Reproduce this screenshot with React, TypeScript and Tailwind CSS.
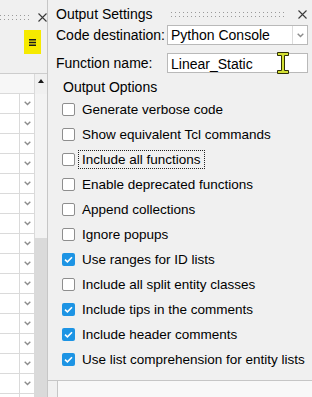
import React from "react";

const options = [
  { label: "Generate verbose code", checked: false },
  { label: "Show equivalent Tcl commands", checked: false },
  { label: "Include all functions", checked: false, focused: true },
  { label: "Enable deprecated functions", checked: false },
  { label: "Append collections", checked: false },
  { label: "Ignore popups", checked: false },
  { label: "Use ranges for ID lists", checked: true },
  { label: "Include all split entity classes", checked: false },
  { label: "Include tips in the comments", checked: true },
  { label: "Include header comments", checked: true },
  { label: "Use list comprehension for entity lists", checked: true },
];

// two rows of tiny dots, the drag handle on the panel headers
function Grip({ width }: { width: number }) {
  return (
    <svg width={width} height={5} className="block">
      <defs>
        <pattern id={`grip${width}`} width="4" height="4" patternUnits="userSpaceOnUse">
          <rect x="0" y="0" width="1" height="1" fill="#9a9a9a" />
        </pattern>
      </defs>
      <rect x="0" y="0" width={width} height="5" fill={`url(#grip${width})`} />
    </svg>
  );
}

function CloseX() {
  return (
    <svg width="9" height="9" viewBox="0 0 9 9" className="block">
      <path d="M0.5 0.5 L8.5 8.5 M8.5 0.5 L0.5 8.5" stroke="#3a3a3a" strokeWidth="1.1" />
    </svg>
  );
}

function Chevron() {
  return (
    <svg width="7" height="5" viewBox="0 0 7 5" className="block">
      <path d="M0.7 0.8 L3.5 3.6 L6.3 0.8" fill="none" stroke="#8c8c8c" strokeWidth="1.4" />
    </svg>
  );
}

function Checkbox({ checked }: { checked: boolean }) {
  if (checked) {
    return (
      <div className="w-[13px] h-[13px] shrink-0 rounded-[2px] bg-[#1d94e4] flex items-center justify-center">
        <svg width="9" height="7" viewBox="0 0 9 7" className="block">
          <path d="M1 3.6 L3.4 5.8 L8 1.2" fill="none" stroke="#ffffff" strokeWidth="1.6" />
        </svg>
      </div>
    );
  }
  return <div className="w-[13px] h-[13px] shrink-0 rounded-[2px] border border-[#8e8e8e] bg-white" />;
}

function IBeam() {
  return (
    <svg width="12" height="22" viewBox="0 0 12 22" className="block">
      <path
        d="M0.5 0.5 H11.5 V3.5 H7.5 V18.5 H11.5 V21.5 H0.5 V18.5 H4.5 V3.5 H0.5 Z"
        fill="#d3df33"
        stroke="#2e2e06"
        strokeWidth="1"
      />
    </svg>
  );
}

export default function App() {
  const rows = Array.from({ length: 16 });

  return (
    <div className="w-[312px] h-[397px] overflow-hidden flex bg-[#f0f0f0] text-[14px] text-black font-['Liberation_Sans',Arial,sans-serif]">
      {/* left docked table */}
      <div className="w-[47px] shrink-0 flex flex-col">
        <div className="h-[73px] flex flex-col">
          <div className="mt-[13px] h-[9px] flex items-center">
            <Grip width={32} />
            <div className="ml-auto">
              <CloseX />
            </div>
          </div>
          <div className="mt-[8px] ml-[24px] w-[17px] h-[24px] bg-[#f6ea00] flex items-center justify-center">
            <svg width="7" height="7" viewBox="0 0 7 7" className="block">
              <path d="M0 0.75 H7 M0 3.5 H7 M0 6.25 H7" stroke="#1a1a1a" strokeWidth="1.4" />
            </svg>
          </div>
        </div>
        <div className="flex-1 flex border-t border-[#cdcdcd] overflow-hidden">
          <div className="w-[35px] flex flex-col border-r border-[#dadada]">
            <div className="h-[20px] shrink-0 bg-[#f7f7f7] border-b border-[#dadada]" />
            {rows.map((_, i) => (
              <div key={i} className="h-[20px] shrink-0 flex border-b border-[#dadada] bg-white">
                <div className="w-[20px] border-r border-[#dadada]" />
                <div className="flex-1 flex items-center justify-center">
                  <Chevron />
                </div>
              </div>
            ))}
          </div>
          <div className="w-[12px] flex flex-col">
            <div className="h-[20px] shrink-0 flex items-start justify-center pt-[5px]">
              <svg width="6" height="4" viewBox="0 0 6 4" className="block">
                <path d="M0 4 L3 0 L6 4 Z" fill="#1a1a1a" />
              </svg>
            </div>
            <div className="h-[144px] shrink-0 bg-[#f3f3f3]" />
            <div className="flex-1 bg-[#dadada]" />
          </div>
        </div>
      </div>

      {/* output settings panel */}
      <div className="flex-1 flex flex-col">
        <div className="h-[381px] shrink-0 flex flex-col border-l border-b border-[#c6c6c6] bg-[#f0f0f0]">
          <div className="mt-[4px] h-[20px] flex items-center pl-[8px] pr-[5px]">
            <span>Output Settings</span>
            <div className="ml-auto">
              <Grip width={116} />
            </div>
            <div className="ml-[11px]">
              <CloseX />
            </div>
          </div>

          <div className="mt-[1px] h-[20px] flex items-center pl-[8px] pr-[4px]">
            <span className="w-[111px] shrink-0">Code destination:</span>
            <div className="flex-1 h-full flex border border-[#b9b9b9] bg-white">
              <span className="flex-1 pl-[3px] leading-[18px]">Python Console</span>
              <div className="w-[15px] border-l border-[#dcdcdc] flex items-center justify-center">
                <Chevron />
              </div>
            </div>
          </div>

          <div className="mt-[8px] h-[20px] flex items-center pl-[8px] pr-[4px]">
            <span className="w-[111px] shrink-0 pt-[1px]">Function name:</span>
            <div className="relative flex-1 h-full border border-[#b9b9b9] bg-white">
              <span className="block pl-[3px] leading-[18px] pt-[1px]">Linear_Static</span>
              <div className="absolute left-[109px] top-[-2px]">
                <IBeam />
              </div>
            </div>
          </div>

          <div className="mt-[4px] h-[20px] flex items-center pl-[15px]">Output Options</div>

          <div className="flex flex-col text-[13.5px]">
            {options.map((o) => (
              <div key={o.label} className="h-[25px] flex items-center pl-[14px] gap-[3px] whitespace-nowrap">
                <Checkbox checked={o.checked} />
                <span
                  className={
                    o.focused
                      ? "px-[3px] leading-[17px] border border-dotted border-[#222]"
                      : "px-[3px] leading-[17px] border border-transparent"
                  }
                >
                  {o.label}
                </span>
              </div>
            ))}
          </div>
        </div>
        <div className="flex-1 flex">
          <div className="w-[10px] border-l border-[#c6c6c6]" />
          <div className="flex-1 border-l border-[#c6c6c6] bg-[#f8f8f8]" />
        </div>
      </div>
    </div>
  );
}
